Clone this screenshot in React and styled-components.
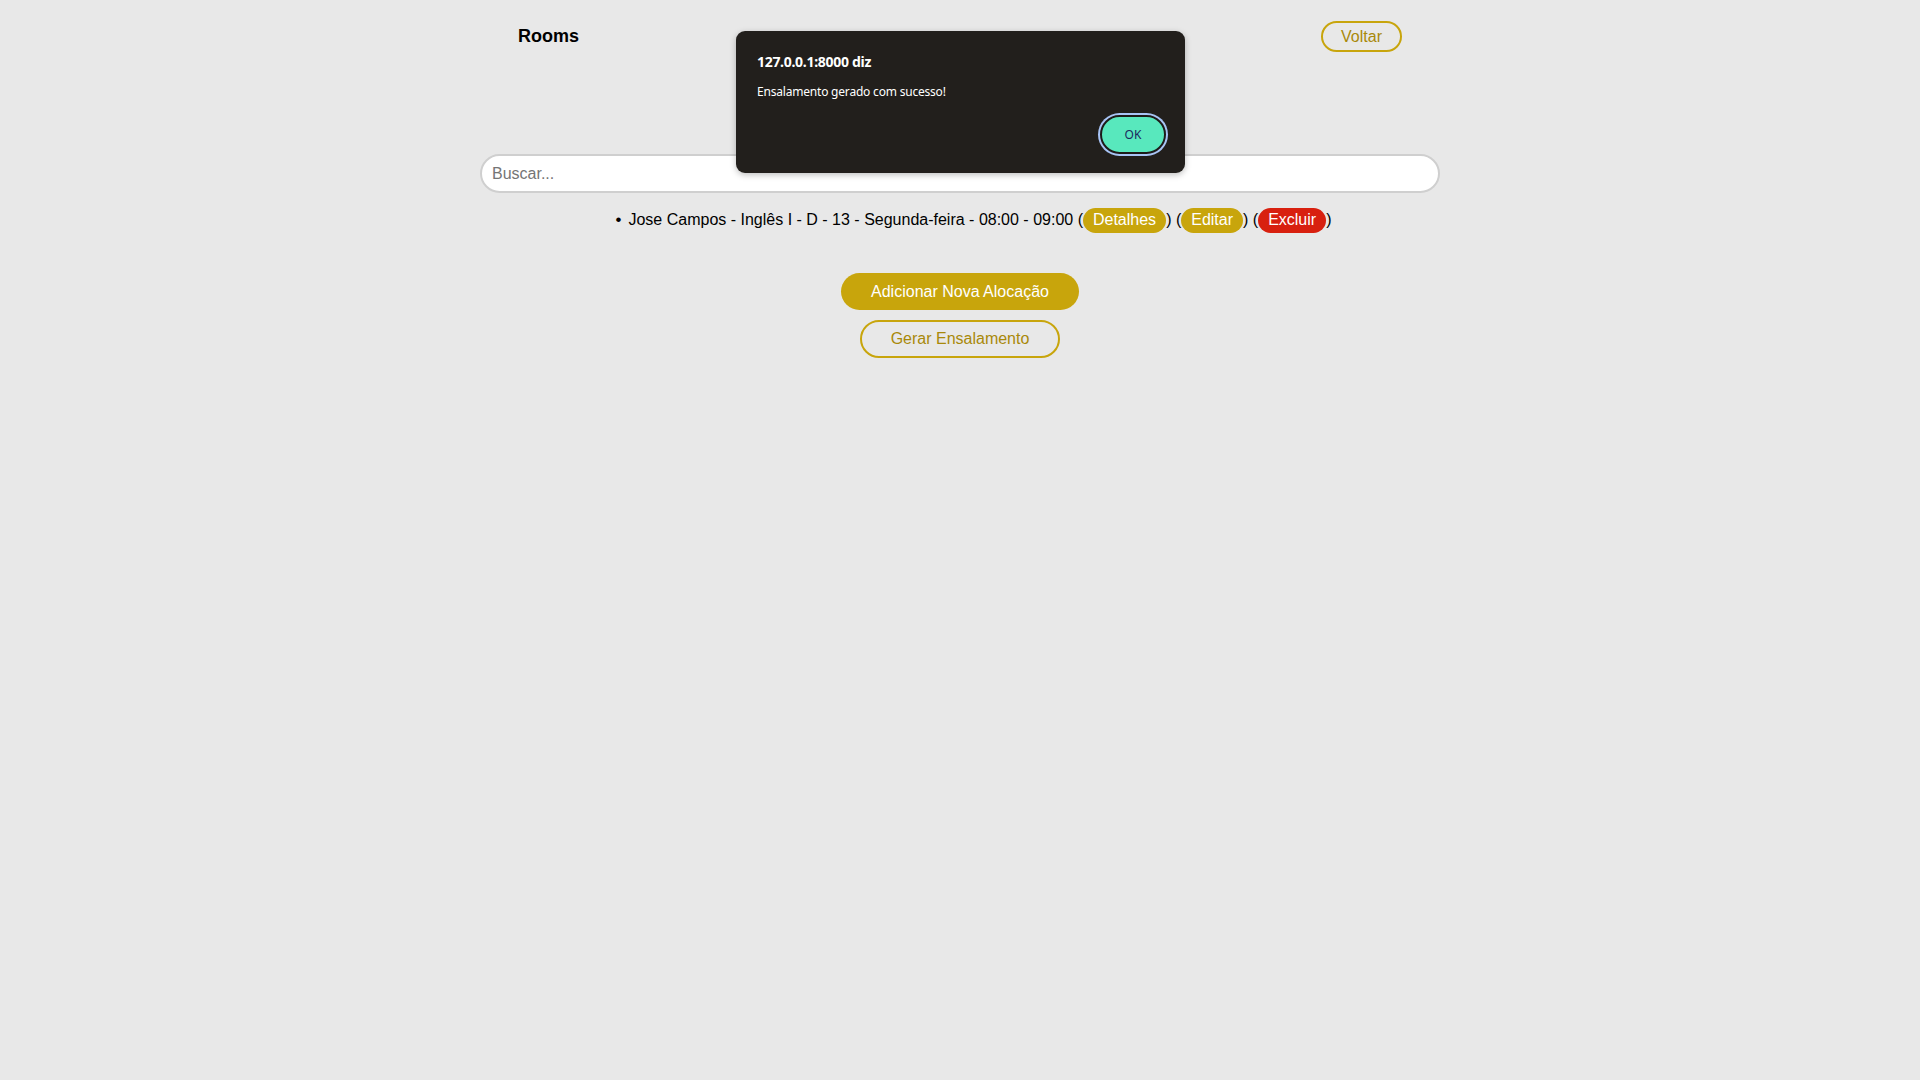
import React, { useState } from 'react';
import styled, { createGlobalStyle } from 'styled-components';

const GOLD = '#c8a50c';

const GlobalStyle = createGlobalStyle`
  html, body {
    margin: 0;
    padding: 0;
    background: #e8e8e8;
    font-family: Arial, "Liberation Sans", sans-serif;
    color: #000;
  }
  #root {
    min-height: 100vh;
  }
`;

const allocations = [
  {
    id: 1,
    professor: 'Jose Campos',
    disciplina: 'Inglês I',
    bloco: 'D',
    sala: '13',
    dia: 'Segunda-feira',
    inicio: '08:00',
    fim: '09:00',
  },
];

export default function App() {
  const [search, setSearch] = useState('');
  const [showAlert, setShowAlert] = useState(true);

  const filtered = allocations.filter(a =>
    `${a.professor} ${a.disciplina}`.toLowerCase().includes(search.toLowerCase())
  );

  return (
    <Page>
      <GlobalStyle />
      <Container>
        <Header>
          <Title>Rooms</Title>
          <OutlineButton $small>Voltar</OutlineButton>
        </Header>

        <SearchInput
          type="text"
          placeholder="Buscar..."
          value={search}
          onChange={e => setSearch(e.target.value)}
        />

        <List>
          {filtered.map(a => (
            <Item key={a.id}>
              {a.professor} - {a.disciplina} - {a.bloco} - {a.sala} - {a.dia} -{' '}
              {a.inicio} - {a.fim} (<Pill>Detalhes</Pill>) (<Pill>Editar</Pill>) (
              <Pill $danger>Excluir</Pill>)
            </Item>
          ))}
        </List>

        <Actions>
          <FilledButton>Adicionar Nova Alocação</FilledButton>
          <OutlineButton>Gerar Ensalamento</OutlineButton>
        </Actions>
      </Container>

      {showAlert && (
        <Dialog>
          <DialogTitle>127.0.0.1:8000 diz</DialogTitle>
          <DialogMessage>Ensalamento gerado com sucesso!</DialogMessage>
          <DialogFooter>
            <OkButton onClick={() => setShowAlert(false)}>OK</OkButton>
          </DialogFooter>
        </Dialog>
      )}
    </Page>
  );
}

const Page = styled.div`
  position: relative;
  min-height: 100vh;
`;

const Container = styled.div`
  width: 960px;
  margin: 0 auto;
  display: flex;
  flex-direction: column;
  align-items: center;
`;

const Header = styled.header`
  box-sizing: border-box;
  width: 100%;
  padding: 21px 38px 0;
  height: 154px;
  display: flex;
  justify-content: space-between;
  align-items: flex-start;
`;

const Title = styled.h2`
  margin: 5px 0 0;
  font-size: 18px;
  font-weight: bold;
`;

const SearchInput = styled.input`
  box-sizing: border-box;
  width: 100%;
  height: 39px;
  padding: 0 10px;
  border: 2px solid #cfcfcf;
  border-radius: 20px;
  background: #fff;
  font-family: Arial, "Liberation Sans", sans-serif;
  font-size: 16px;
  outline: none;
  &::placeholder {
    color: #757575;
  }
`;

const List = styled.ul`
  box-sizing: border-box;
  width: 100%;
  margin: 14px 0 0;
  padding-left: 27px;
  text-align: center;
  list-style: none;
`;

const Item = styled.li`
  font-size: 16px;
  line-height: 26px;
  &::before {
    content: '•';
    margin-right: 7px;
    font-size: 17px;
  }
`;

const Pill = styled.button`
  font-family: Arial, "Liberation Sans", sans-serif;
  font-size: 16px;
  line-height: 18px;
  padding: 3px 10px 4px;
  border: none;
  border-radius: 14px;
  color: #fff;
  background: ${p => (p.$danger ? '#d8200f' : GOLD)};
  cursor: pointer;
  vertical-align: baseline;
`;

const Actions = styled.div`
  margin-top: 40px;
  display: flex;
  flex-direction: column;
  align-items: center;
  gap: 10px;
`;

const FilledButton = styled.button`
  font-family: Arial, "Liberation Sans", sans-serif;
  font-size: 16px;
  line-height: 18px;
  padding: 10px 30px 9px;
  border: none;
  border-radius: 20px;
  background: ${GOLD};
  color: #fff;
  cursor: pointer;
`;

const OutlineButton = styled.button`
  font-family: Arial, "Liberation Sans", sans-serif;
  font-size: 16px;
  line-height: 18px;
  padding: ${p => (p.$small ? '5px 18px 4px' : '8px 29px')};
  border: 2px solid ${GOLD};
  border-radius: 20px;
  background: transparent;
  color: #a8890a;
  cursor: pointer;
`;

const Dialog = styled.div`
  position: absolute;
  top: 31px;
  left: 736px;
  box-sizing: border-box;
  width: 449px;
  height: 142px;
  padding: 21px 19px 19px 21px;
  background: #221f1c;
  border-radius: 9px;
  box-shadow: 0 2px 6px rgba(0, 0, 0, 0.25);
  font-family: "Noto Sans", "Open Sans", sans-serif;
  color: #fff;
  display: flex;
  flex-direction: column;
`;

const DialogTitle = styled.div`
  font-size: 14px;
  font-weight: bold;
  letter-spacing: -0.3px;
`;

const DialogMessage = styled.div`
  margin-top: 12px;
  font-size: 12px;
  letter-spacing: -0.2px;
`;

const DialogFooter = styled.div`
  margin-top: auto;
  display: flex;
  justify-content: flex-end;
`;

const OkButton = styled.button`
  width: 66px;
  height: 39px;
  border: 2px solid #1d1b19;
  border-radius: 20px;
  background: #58e8bd;
  color: #1b2a5e;
  font-family: "Noto Sans", "Open Sans", sans-serif;
  font-size: 12px;
  box-shadow: 0 0 0 2px #a8c4f5;
  cursor: pointer;
`;
